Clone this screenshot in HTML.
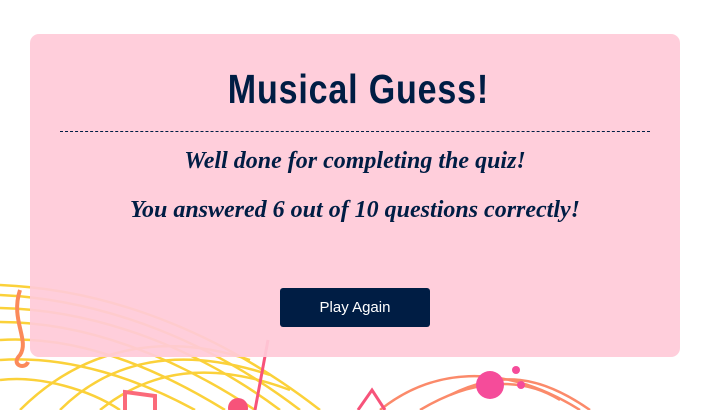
<!DOCTYPE html>
<html><head><style>
html,body{margin:0;padding:0;background:#fff;width:717px;height:410px;overflow:hidden;position:relative;font-family:"Liberation Sans",sans-serif}
svg.bg{position:absolute;left:0;top:0}
.card{position:absolute;left:30px;top:34px;width:650px;height:323px;background:rgba(255,202,216,0.93);border-radius:9px}
h1{position:absolute;left:0;right:0;top:66px;margin:0;text-align:center;font-family:"Liberation Sans",sans-serif;font-weight:bold;font-size:41px;letter-spacing:1px;color:#001d44;transform:scaleX(0.83);transform-origin:358px 0}
.hr{position:absolute;left:60px;width:590px;top:131px;border-top:1px dashed #001d44}
p{position:absolute;left:30px;width:650px;margin:0;text-align:center;font-family:"Liberation Serif",serif;font-style:italic;font-weight:bold;font-size:24px;color:#001d44}
.btn{position:absolute;left:280px;top:288px;width:150px;height:39px;background:#001d44;border-radius:3px;color:#fff;font-size:15px;text-align:center;line-height:39px}
</style></head><body>
<svg class="bg" width="717" height="410" viewBox="0 0 717 410">
<g fill="none" stroke="#fbd13a" stroke-width="2.5">
<path d="M0 285 C120 290 230 340 320 410"/>
<path d="M0 295 C110 300 215 345 300 410"/>
<path d="M0 308 C100 310 200 350 280 410"/>
<path d="M0 322 C90 322 180 360 255 410"/>
<path d="M0 340 C80 335 160 370 225 410"/>
<path d="M0 360 C70 355 140 380 195 410"/>
<path d="M20 410 C80 350 160 330 250 360"/>
<path d="M60 410 C110 360 180 345 270 375"/>
<path d="M100 410 C150 370 210 360 290 390"/>
<path d="M0 380 C40 375 90 390 120 410"/>
</g>
<g fill="none" stroke="#fb8a6a" stroke-width="2.5">
<path d="M380 410 C430 370 500 360 580 410"/>
<path d="M420 410 C470 380 520 375 560 400"/>
<path d="M450 395 C500 370 540 375 590 410"/>
</g>
<path d="M20 290 C10 320 30 340 20 355 C10 365 25 370 28 362" fill="none" stroke="#fb8a5a" stroke-width="4"/>
<circle cx="490" cy="385" r="14" fill="#f54c9a"/>
<circle cx="516" cy="370" r="4" fill="#f54c9a"/>
<circle cx="521" cy="385" r="4" fill="#f54c9a"/>
<path d="M268 340 L255 410" stroke="#f7537a" stroke-width="3"/>
<circle cx="238" cy="408" r="10" fill="#f7537a"/>
<path d="M125 410 L125 392 L155 396 L155 410" fill="none" stroke="#fb6a7a" stroke-width="4"/>
<path d="M358 410 L372 390 L385 410" fill="none" stroke="#f7537a" stroke-width="3"/>
</svg>
<div class="card"></div>
<h1>Musical Guess!</h1>
<div class="hr"></div>
<p style="top:148px">Well done for completing the quiz!</p>
<p style="top:197px">You answered 6 out of 10 questions correctly!</p>
<div class="btn">Play Again</div>
</body></html>
